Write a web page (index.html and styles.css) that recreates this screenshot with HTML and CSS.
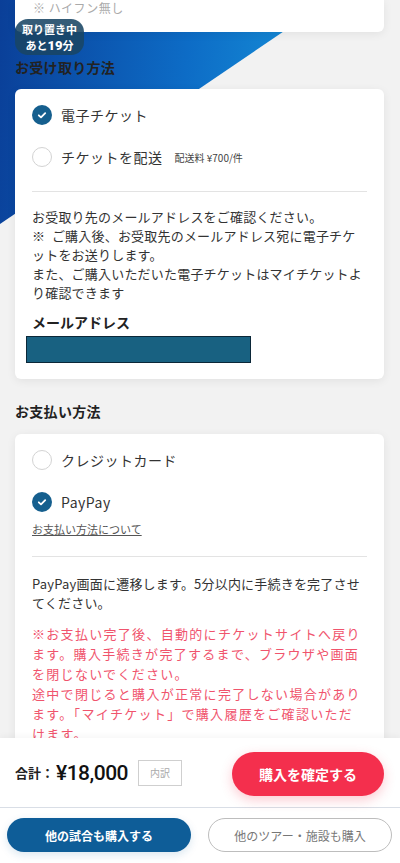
FILE: index.html
```html
<!DOCTYPE html>
<html lang="ja">
	<head>
		<meta charset="utf-8">
		<title>購入手続き</title>
		<link rel="stylesheet" href="styles.css">
	</head>
	<body>
		<div class="screen">
			<!-- 背景の青い三角 -->
			<div class="hero-bg"></div>

			<main class="scroll">
				<section class="card card-top">
					<p class="hint">※ ハイフン無し</p>
				</section>

				<div class="hold-badge">
					<span>取り置き中</span>
					<span>あと<b>19</b>分</span>
				</div>

				<h2 class="sec-title">お受け取り方法</h2>
				<section class="card">
					<div class="option">
						<svg class="radio" viewBox="0 0 20 20"><circle cx="10" cy="10" r="10" fill="#155f8e"/><path d="M6.8 10.3l2.2 2.1 4.2-4.3" stroke="#fff" stroke-width="1.8" fill="none" stroke-linecap="round" stroke-linejoin="round"/></svg>
						<span class="opt-label">電子チケット</span>
					</div>
					<div class="option">
						<span class="radio radio-off"></span>
						<span class="opt-label">チケットを配送</span>
						<span class="opt-note">配送料 ¥700/件</span>
					</div>
					<hr class="line">
					<p class="txt">お受取り先のメールアドレスをご確認ください。<br>※&ensp;ご購入後、お受取先のメールアドレス宛に電子チケットをお送りします。<br>また、ご購入いただいた電子チケットはマイチケットより確認できます</p>
					<h3 class="field-label">メールアドレス</h3>
					<div class="masked"></div>
				</section>

				<h2 class="sec-title">お支払い方法</h2>
				<section class="card">
					<div class="option">
						<span class="radio radio-off"></span>
						<span class="opt-label">クレジットカード</span>
					</div>
					<div class="option">
						<svg class="radio" viewBox="0 0 20 20"><circle cx="10" cy="10" r="10" fill="#155f8e"/><path d="M6.8 10.3l2.2 2.1 4.2-4.3" stroke="#fff" stroke-width="1.8" fill="none" stroke-linecap="round" stroke-linejoin="round"/></svg>
						<span class="opt-label">PayPay</span>
					</div>
					<a class="help-link" href="#">お支払い方法について</a>
					<hr class="line">
					<p class="txt">PayPay画面に遷移します。5分以内に手続きを完了させてください。</p>
					<p class="txt-warn">※お支払い完了後、自動的にチケットサイトへ戻ります。購入手続きが完了するまで、ブラウザや画面を閉じないでください。<br>途中で閉じると購入が正常に完了しない場合があります。「マイチケット」で購入履歴をご確認いただけます。</p>
				</section>
			</main>

			<footer class="bar">
				<div class="bar-top">
					<div class="total">
						<span class="total-label">合計：</span>
						<span class="total-price">¥18,000</span>
						<span class="breakdown">内訳</span>
					</div>
					<button class="btn-buy" type="button">購入を確定する</button>
				</div>
				<div class="bar-bottom">
					<button class="btn-more" type="button">他の試合も購入する</button>
					<button class="btn-other" type="button">他のツアー・施設も購入</button>
				</div>
			</footer>
		</div>
	</body>
</html>
```

FILE: styles.css
```css
*{
	box-sizing: border-box;
}
body{
	margin: 0;
	background: #f2f2f2;
	font-family: "Noto Sans CJK JP", "Noto Sans", sans-serif;
	color: #333;
}
.screen{
	position: relative;
	height: 863px;
	display: flex;
	flex-direction: column;
	overflow: hidden;
}
.hero-bg{
	position: absolute;
	left: 0;
	top: 0;
	width: 330px;
	height: 224px;
	background: linear-gradient(95deg, #0a3f98 0%, #0d6cc6 55%, #1897dc 100%);
	clip-path: polygon(0 0, 100% 0, 0 100%);
}
.scroll{
	position: relative;
	flex: 1;
	min-height: 0;
	overflow: hidden;
	padding: 0 16px 0 15px;
}
.card{
	background: #fff;
	border-radius: 6px;
	box-shadow: 0 2px 10px rgba(0,0,0,.07);
	padding: 16px 17px 16px 17px;
}
.card-top{
	height: 32px;
	padding: 0 18px;
	border-radius: 0 0 6px 6px;
}
.hint{
	margin: 0;
	font-size: 12px;
	line-height: 16px;
	color: #aaa;
	letter-spacing: .5px;
}
.hold-badge{
	position: absolute;
	left: 15px;
	top: 19px;
	width: 69px;
	height: 36px;
	border-radius: 13px;
	background: rgba(25,70,100,.88);
	color: #fff;
	font-size: 11px;
	font-weight: bold;
	line-height: 16px;
	display: flex;
	flex-direction: column;
	align-items: center;
	justify-content: center;
}
.hold-badge b{
	font-size: 13px;
	font-family: Roboto, sans-serif;
}
.sec-title{
	margin: 25px 0 12px;
	font-size: 14px;
	line-height: 20px;
	letter-spacing: .3px;
	color: #222;
}
.card + .sec-title{
	margin-top: 22px;
	margin-bottom: 13px;
}
.option{
	display: flex;
	align-items: center;
	height: 20px;
	margin-bottom: 22px;
}
.option:nth-child(2){
	margin-bottom: 0;
}
.radio{
	width: 20px;
	height: 20px;
	flex: none;
	margin-right: 9px;
}
.radio-off{
	border: 1.5px solid #d3d3d3;
	border-radius: 50%;
}
.opt-label{
	font-size: 14px;
	letter-spacing: .5px;
}
.opt-note{
	font-size: 10px;
	margin-left: 12px;
	color: #444;
}
.line{
	border: 0;
	border-top: 1px solid #e3e3e3;
	margin: 24px 0 15px;
}
.txt{
	margin: 0;
	font-size: 13px;
	line-height: 19px;
	letter-spacing: .2px;
}
.field-label{
	margin: 10px 0 4px;
	font-size: 14px;
	line-height: 20px;
	color: #222;
}
.masked{
	width: 225px;
	height: 27px;
	margin-left: -6px;
	background: #186181;
	border: 1.5px solid #0b2738;
}
.help-link{
	display: inline-block;
	margin-top: 9px;
	font-size: 11px;
	line-height: 16px;
	color: #555;
}
.help-link + .line{
	margin-top: 17px;
	margin-bottom: 17px;
}
.txt-warn{
	margin: 12px 0 0;
	font-size: 13px;
	line-height: 20px;
	letter-spacing: 1.3px;
	color: #f0546d;
}
.bar{
	position: relative;
	height: 125px;
	flex: none;
	background: #fff;
	box-shadow: 0 -2px 6px rgba(0,0,0,.04);
}
.bar-top{
	height: 70px;
	display: flex;
	align-items: center;
	justify-content: space-between;
	padding: 0 16px 0 15px;
	border-bottom: 1px solid #d9dee6;
}
.total{
	display: flex;
	align-items: center;
}
.total-label{
	font-size: 13px;
	font-weight: bold;
	color: #222;
}
.total-price{
	font-family: Roboto, sans-serif;
	font-size: 21px;
	font-weight: 500;
	color: #111;
	margin-left: 2px;
	letter-spacing: -.5px;
}
.breakdown{
	margin-left: 10px;
	width: 44px;
	height: 26px;
	border: 1px solid #cfcfcf;
	font-size: 10px;
	color: #aaa;
	display: flex;
	align-items: center;
	justify-content: center;
}
.btn-buy{
	width: 152px;
	height: 44px;
	border: 0;
	border-radius: 22px;
	background: #f42f4d;
	color: #fff;
	font-family: inherit;
	font-size: 14px;
	font-weight: bold;
	box-shadow: 0 4px 12px rgba(244,47,77,.25);
	margin-top: 2px;
}
.bar-bottom{
	display: flex;
	justify-content: space-between;
	padding: 10px 8px 0 7px;
}
.btn-more,
.btn-other{
	width: 184px;
	height: 34px;
	border-radius: 17px;
	font-family: inherit;
	font-size: 12px;
}
.btn-more{
	border: 0;
	background: #0e5d98;
	color: #fff;
	font-weight: bold;
	box-shadow: 0 3px 8px rgba(14,93,152,.15);
}
.btn-other{
	border: 1px solid #bdbdbd;
	background: #fff;
	color: #777;
}
```
